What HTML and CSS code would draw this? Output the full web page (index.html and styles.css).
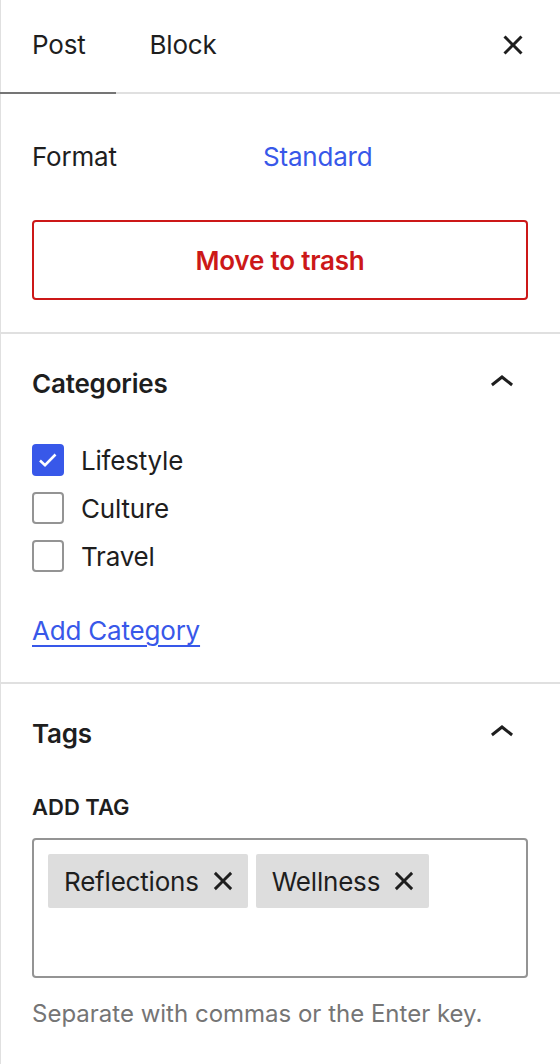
FILE: index.html
```html
<!DOCTYPE html>
<html>
  <head>
    <meta http-equiv="Content-Type" content="text/html; charset=UTF-8">
    <title>Post settings</title>
    <link rel="stylesheet" href="styles.css">
  </head>
  <body>
    <div class="sidebar">
      <div class="tabs">
        <button class="tab active">Post</button>
        <button class="tab">Block</button>
        <button class="close" aria-label="Close settings">
          <svg width="48" height="48" viewBox="0 0 24 24"><path d="M12 13.06l3.712 3.713 1.061-1.06L13.061 12l3.712-3.712-1.06-1.06L12 10.938 8.288 7.227l-1.061 1.06L10.939 12l-3.712 3.712 1.06 1.061L12 13.061z"/></svg>
        </button>
      </div>

      <div class="panel summary">
        <div class="format-row">
          <span>Format</span>
          <a class="link" href="#">Standard</a>
        </div>
        <button class="trash">Move to trash</button>
      </div>

      <div class="panel">
        <div class="panel-title">
          <h2>Categories</h2>
          <svg width="48" height="48" viewBox="0 0 24 24"><path d="M6.5 12.4L12 8l5.5 4.4-.9 1.2L12 10l-4.6 3.6-.9-1.2z"/></svg>
        </div>
        <ul class="checklist">
          <li>
            <span class="box checked">
              <svg width="32" height="32" viewBox="0 0 32 32"><path d="M8 16.5l5 4.6 10.5-10.6" fill="none" stroke="#fff" stroke-width="2.6"/></svg>
            </span>
            Lifestyle
          </li>
          <li><span class="box"></span>Culture</li>
          <li><span class="box"></span>Travel</li>
        </ul>
        <a class="link add-cat" href="#">Add Category</a>
      </div>

      <div class="panel">
        <div class="panel-title">
          <h2>Tags</h2>
          <svg width="48" height="48" viewBox="0 0 24 24"><path d="M6.5 12.4L12 8l5.5 4.4-.9 1.2L12 10l-4.6 3.6-.9-1.2z"/></svg>
        </div>
        <div class="field-label">Add tag</div>
        <div class="token-box">
          <span class="token">Reflections
            <span class="token-x"><svg width="46" height="46" viewBox="0 0 24 24"><path d="M12 13.06l3.712 3.713 1.061-1.06L13.061 12l3.712-3.712-1.06-1.06L12 10.938 8.288 7.227l-1.061 1.06L10.939 12l-3.712 3.712 1.06 1.061L12 13.061z"/></svg></span>
          </span>
          <span class="token">Wellness
            <span class="token-x"><svg width="46" height="46" viewBox="0 0 24 24"><path d="M12 13.06l3.712 3.713 1.061-1.06L13.061 12l3.712-3.712-1.06-1.06L12 10.938 8.288 7.227l-1.061 1.06L10.939 12l-3.712 3.712 1.06 1.061L12 13.061z"/></svg></span>
          </span>
        </div>
        <p class="help">Separate with commas or the Enter key.</p>
      </div>
    </div>
  </body>
</html>
```

FILE: styles.css
```css
body {
  margin: 0;
  font-family: Inter, "Noto Sans", sans-serif;
  letter-spacing: -0.2px;
  color: #1e1e1e;
  background-color: #fff;
}
.sidebar {
  width: 560px;
  min-height: 1064px;
  box-sizing: border-box;
  border-left: 1px solid #e0e0e0;
}
button {
  font-family: inherit;
  letter-spacing: inherit;
  background: none;
  border: 0;
  color: inherit;
  cursor: pointer;
}
svg {
  display: block;
  fill: #1e1e1e;
}
.tabs {
  display: flex;
  align-items: center;
  height: 92px;
  border-bottom: 2px solid #e0e0e0;
}
.tab {
  position: relative;
  height: 100%;
  padding: 0 30px 3px 31px;
  font-size: 26px;
}
.tab + .tab {
  padding-left: 34px;
}
.tab.active::after {
  content: "";
  position: absolute;
  left: -1px;
  right: 0;
  bottom: -2px;
  height: 2px;
  background-color: #757575;
}
.close {
  margin-left: auto;
  margin-right: 23px;
  padding: 0 0 2px;
}
.panel {
  padding: 0 32px 32px 31px;
  border-bottom: 2px solid #e0e0e0;
}
.summary {
  padding-top: 30px;
}
.format-row {
  display: grid;
  grid-template-columns: 231px 1fr;
  align-items: center;
  height: 64px;
  font-size: 26px;
  margin-bottom: 32px;
}
.link {
  color: #3858e9;
  text-decoration: none;
  font-size: 26px;
}
.trash {
  display: block;
  width: 100%;
  height: 80px;
  border: 2px solid #cc1818;
  border-radius: 4px;
  color: #cc1818;
  font-size: 26px;
  font-weight: 600;
}
.panel-title {
  display: flex;
  align-items: center;
  justify-content: space-between;
  height: 98px;
  margin-right: 2px;
  padding-bottom: 2px;
}
.panel-title h2 {
  margin: 0;
  font-size: 26px;
  font-weight: 600;
}
.checklist {
  list-style: none;
  margin: 10px 0 0;
  padding: 0;
}
.checklist li {
  display: flex;
  align-items: center;
  gap: 17px;
  height: 32px;
  margin-bottom: 16px;
  font-size: 26px;
}
.box {
  width: 32px;
  height: 32px;
  box-sizing: border-box;
  border: 2px solid #949494;
  border-radius: 4px;
}
.box.checked {
  border: 0;
  background-color: #3858e9;
}
.add-cat {
  display: inline-block;
  margin-top: 24px;
  line-height: 38px;
  text-decoration: underline;
  text-decoration-thickness: 2px;
  text-underline-offset: 5px;
}
.field-label {
  margin-top: 7px;
  line-height: 32px;
  font-size: 22px;
  font-weight: 600;
  letter-spacing: 0;
  text-transform: uppercase;
}
.token-box {
  display: flex;
  flex-wrap: wrap;
  align-content: flex-start;
  gap: 8px;
  height: 140px;
  margin-top: 15px;
  padding: 14px;
  box-sizing: border-box;
  border: 2px solid #949494;
  border-radius: 4px;
}
.token {
  display: flex;
  align-items: center;
  height: 54px;
  padding: 0 2px 0 16px;
  background-color: #ddd;
  border-radius: 2px;
  font-size: 26px;
}
.token-x {
  margin-left: 1px;
}
.help {
  margin: 16px 0 0;
  line-height: 40px;
  font-size: 24px;
  letter-spacing: 0;
  color: #757575;
}
```
